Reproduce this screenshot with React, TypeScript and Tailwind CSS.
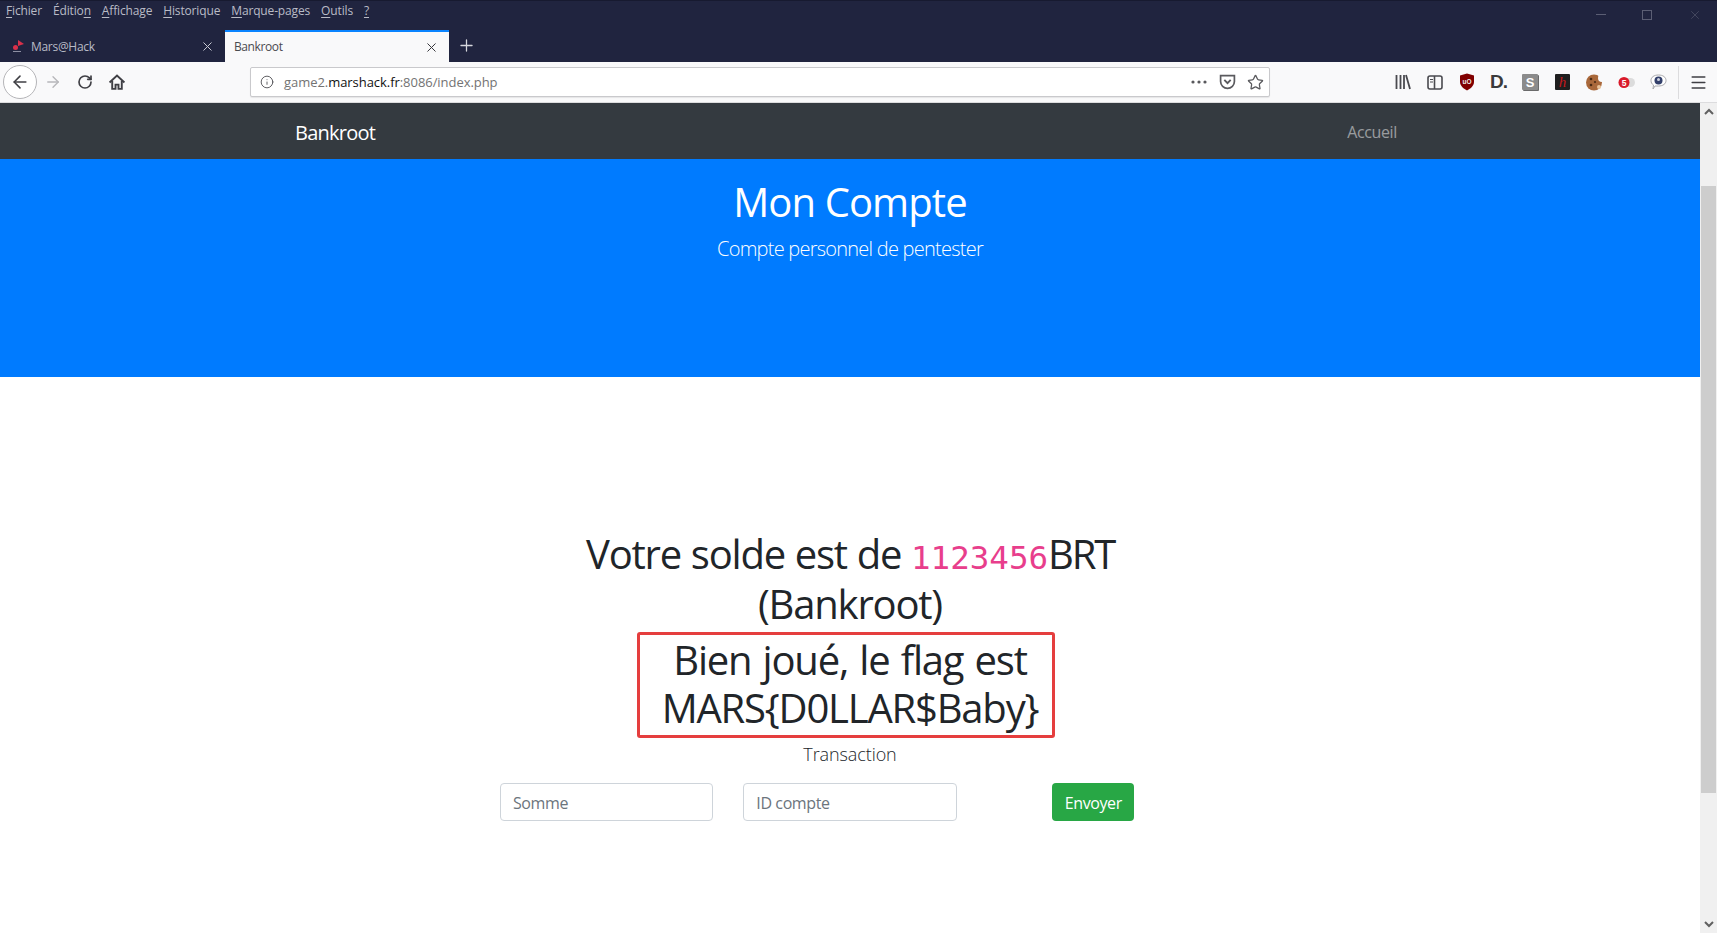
import { ArrowLeft, ArrowRight, RotateCw, Info, Star, X, Plus, Menu } from "lucide-react";

const sans = "font-['Open_Sans','Noto_Sans',sans-serif]";

function MenuItem({ before = "", u, after = "" }: { before?: string; u: string; after?: string }) {
  return (
    <span>
      {before}
      <u className="underline-offset-2">{u}</u>
      {after}
    </span>
  );
}

function Chrome() {
  return (
    <header className="bg-[#20243f] border-t border-[#171a30] font-['Open_Sans',sans-serif]">
      <div className="h-[29px] flex items-center justify-between">
        <div className="flex gap-[11px] pl-[6px] text-[12px] tracking-[-0.15px] text-[#b9bbc6] pb-[10px]">
          <MenuItem u="F" after="ichier" />
          <MenuItem before="Éditio" u="n" />
          <MenuItem u="A" after="ffichage" />
          <MenuItem u="H" after="istorique" />
          <MenuItem u="M" after="arque-pages" />
          <MenuItem u="O" after="utils" />
          <MenuItem u="?" />
        </div>
        <div className="flex items-center gap-[36px] pr-[15px] pb-[2px] text-[#5b5e74]">
          <div className="w-[10px] h-px bg-[#5b5e74]" />
          <div className="w-[10px] h-[10px] border border-[#5b5e74]" />
          <X size={14} strokeWidth={1} />
        </div>
      </div>
      <div className="h-[32px] flex items-end text-[12px] tracking-[-0.3px]">
        <div className="w-[225px] h-[32px] flex items-center pl-[12px] pr-[10px] text-[#b9bbc6]">
          <svg width="14" height="14" viewBox="0 0 14 14" className="mr-[5px]">
            <path d="M6 1 L12 5 L6 7 Z" fill="#d9304a" />
            <circle cx="3.5" cy="8.5" r="2.5" fill="#d9304a" />
            <rect x="1" y="12" width="8" height="1" fill="#8d8fa3" />
          </svg>
          <span className="flex-1 pt-[1px]">Mars@Hack</span>
          <X size={15} strokeWidth={1.6} className="text-[#c8cad3]" />
        </div>
        <div className="w-[224px] h-[32px] bg-[#f9f9fa] border-t-2 border-[#0a84ff] flex items-center pl-[9px] pr-[10px] text-[#4a4a4f]">
          <span className="flex-1 tracking-[-0.4px]">Bankroot</span>
          <X size={15} strokeWidth={1.6} className="text-[#38383d]" />
        </div>
        <div className="h-[32px] w-[34px] flex items-center justify-center pb-[2px] text-[#d6d7dd]">
          <Plus size={19} strokeWidth={1.6} />
        </div>
      </div>
      <div className="h-[41px] bg-[#f9f9fa] border-b border-[#dcdcde] flex items-center text-[#3f3f44]">
        <div className="ml-[3px] w-[34px] h-[34px] rounded-full border border-[#b5b5b8] bg-white flex items-center justify-center">
          <ArrowLeft size={20} strokeWidth={1.9} />
        </div>
        <ArrowRight size={18} strokeWidth={1.8} className="ml-[7px] text-[#b7b7ba]" />
        <RotateCw size={16} strokeWidth={2.5} className="ml-[15px]" />
        <svg width="18" height="17" viewBox="0 0 16 16" className="ml-[15px]" fill="none" stroke="currentColor" strokeWidth="1.8">
          <path d="M1 8 L8 1.5 L15 8" />
          <path d="M3.5 6.5 V14 H6.6 V10 H9.4 V14 H12.5 V6.5" />
        </svg>
        <div className="ml-[124px] w-[1020px] h-[30px] bg-white border border-[#c9c9cc] rounded-[2px] shadow-[0_1px_1px_rgba(0,0,0,0.08)] flex items-center pl-[9px] pr-[5px] text-[#737373]">
          <Info size={14} strokeWidth={1.5} className="text-[#4a4a4f]" />
          <span className="ml-[10px] flex-1 text-[13px] tracking-[-0.05px] pt-[1px]">
            game2.<span className="text-[#111]">marshack.fr</span>:8086/index.php
          </span>
          <svg width="16" height="4" viewBox="0 0 16 4" className="text-[#58585c]" fill="currentColor">
            <circle cx="2" cy="2" r="1.6" />
            <circle cx="8" cy="2" r="1.6" />
            <circle cx="14" cy="2" r="1.6" />
          </svg>
          <svg width="17" height="16" viewBox="0 0 16 15" className="ml-[12px]" fill="none" stroke="#5a5a5e" strokeWidth="1.6">
            <path d="M1.5 1.5 H14.5 V7 A6.5 6.5 0 0 1 1.5 7 Z" />
            <path d="M5 5.5 L8 8.5 L11 5.5" strokeWidth="1.8" />
          </svg>
          <Star size={17} strokeWidth={1.8} className="ml-[11px] text-[#5a5a5e]" />
        </div>
        <div className="ml-[125px] flex items-center h-full">
          <svg width="16" height="16" viewBox="0 0 16 16" stroke="#4a4a4f" strokeWidth="1.8" fill="none">
            <path d="M1.5 1 V15 M5.5 1 V15 M9 1 V15 M11 1 L15 15" />
          </svg>
          <svg width="16" height="15" viewBox="0 0 16 15" className="ml-[16px]" fill="none" stroke="#4a4a4f" strokeWidth="1.6">
            <rect x="1" y="1" width="14" height="13" rx="2" />
            <path d="M7.5 1 V14" />
            <path d="M3 4.5 H6 M3 7 H6" strokeWidth="1.2" />
          </svg>
          <svg width="16" height="18" viewBox="0 0 16 18" className="ml-[16px]">
            <path d="M8 0.5 L15 2.5 V9 C15 13 11 16 8 17.5 C5 16 1 13 1 9 V2.5 Z" fill="#800000" />
            <text x="8" y="11" textAnchor="middle" fontSize="6.5" fontWeight="700" fill="#eee" fontFamily="Liberation Sans">uO</text>
          </svg>
          <span className="ml-[15px] w-[19px] h-[16px] flex items-end text-[#3a3a3a] text-[19px] leading-[16px] font-black tracking-[-1px] font-['Liberation_Sans']">
            D.
          </span>
          <div className="ml-[13px] w-[16px] h-[16px] bg-[#8b8b8b] rounded-[1px] shadow-[1px_1px_0_#6a6a6a] flex items-center justify-center text-white text-[13px] leading-none font-bold font-['Liberation_Sans']">
            S
          </div>
          <div className="ml-[17px] w-[15px] h-[16px] bg-[#1f1f1f] rounded-[1px] flex items-center justify-center text-[#c8191d] text-[15px] leading-none italic font-['Liberation_Serif']">
            h
          </div>
          <svg width="17" height="17" viewBox="0 0 17 17" className="ml-[16px]">
            <circle cx="8" cy="8.5" r="8" fill="#a9683a" />
            <circle cx="16" cy="4" r="4" fill="#f9f9fa" />
            <circle cx="13" cy="13" r="2" fill="#e9c39a" />
            <circle cx="5" cy="5" r="1.3" fill="#4a2a14" />
            <circle cx="9" cy="8" r="1.1" fill="#4a2a14" />
            <circle cx="5" cy="11" r="1.3" fill="#4a2a14" />
          </svg>
          <svg width="17" height="13" viewBox="0 0 17 13" className="ml-[15px]">
            <rect x="6" y="2" width="11" height="9" rx="4.5" fill="#dcdcdc" />
            <circle cx="6" cy="6.5" r="5.5" fill="#d91a2a" />
            <text x="6" y="9.5" textAnchor="middle" fontSize="8.5" fontWeight="700" fill="#fff" fontFamily="Liberation Sans">5</text>
          </svg>
          <svg width="17" height="16" viewBox="0 0 17 16" className="ml-[15px]">
            <path d="M8.5 1 C13 1 16 3.2 16 6.5 C16 9.8 13 12 8.5 12 L5 12 L3 15 L3.5 11 C1.8 10 1 8.5 1 6.5 C1 3.2 4 1 8.5 1 Z" fill="#fff" stroke="#a8a8ac" />
            <circle cx="8.5" cy="6.5" r="4" fill="#33406b" />
            <circle cx="8.5" cy="5.5" r="1.5" fill="#cfd3e0" />
          </svg>
          <div className="ml-[11px] w-px h-[33px] bg-[#dcdcde]" />
          <Menu size={19} strokeWidth={1.9} className="ml-[10px] text-[#3f3f44]" />
        </div>
      </div>
    </header>
  );
}

function Scrollbar() {
  return (
    <aside className="w-[17px] bg-[#f0f0f0] flex flex-col items-center">
      <svg width="10" height="8" viewBox="0 0 10 8" className="mt-[5px] shrink-0 text-[#606060]" fill="none" stroke="currentColor" strokeWidth="2">
        <path d="M1 6 L5 2 L9 6" />
      </svg>
      <div className="mt-[70px] w-[15px] h-[607px] bg-[#cdcdcd] shrink-0" />
      <div className="flex-1" />
      <svg width="10" height="8" viewBox="0 0 10 8" className="mb-[5px] shrink-0 text-[#606060]" fill="none" stroke="currentColor" strokeWidth="2">
        <path d="M1 2 L5 6 L9 2" />
      </svg>
    </aside>
  );
}

function Field({ placeholder }: { placeholder: string }) {
  return (
    <div className="px-[15px]">
      <input
        placeholder={placeholder}
        className="w-full h-[38px] px-[12px] pt-[2px] bg-white border border-[#ced4da] rounded-[4px] text-[16px] tracking-[-0.4px] placeholder:text-[#6c757d] outline-none"
      />
    </div>
  );
}

export default function App() {
  return (
    <div className={`w-[1717px] h-[933px] overflow-hidden flex flex-col bg-white ${sans}`}>
      <Chrome />
      <div className="flex-1 min-h-0 flex">
        <main className="flex-1 min-w-0">
          <nav className="h-[56px] bg-[#343a40]">
            <div className="w-[1140px] mx-auto px-[15px] h-full flex items-center justify-between">
              <a className="text-[20px] text-white tracking-[-0.75px] pt-[4px]">Bankroot</a>
              <a className="text-[16px] text-[#ffffff80] px-[8px] tracking-[-0.35px] pt-[2px]">Accueil</a>
            </div>
          </nav>
          <section className="h-[218px] bg-[#007bff] text-white text-center pt-[19px]">
            <h1 className="text-[40px] leading-[48px] tracking-[-0.9px]">Mon Compte</h1>
            <p className="mt-[8px] text-[20px] leading-[30px] font-light tracking-[-0.76px]">Compte personnel de pentester</p>
          </section>
          <section className="pt-[152px] text-center text-[#212529]">
            <div className="w-[540px] mx-auto">
              <h2 className="text-[40px] leading-[50px] tracking-[-1.2px] [word-spacing:0.6px]">
                Votre solde est de{" "}
                <code className="font-['DejaVu_Sans_Mono',monospace] leading-none text-[32.5px] tracking-[0px] text-[#e83e8c]">1123456</code>
                <span className="tracking-[-2.2px]">BRT</span> (Bankroot)
              </h2>
            </div>
            <div className="ml-[637px] w-[418px] mt-[3px] h-[106px] pl-[8px] border-[3px] border-[#e53e3e] rounded-[3px]">
              <h1 className="text-[40px] leading-[48px] tracking-[-1.2px] [word-spacing:2px] pt-[1px]">
                Bien joué, le flag est MARS{"{"}D0LLAR$Baby{"}"}
              </h1>
            </div>
            <p className="mt-[1px] text-[18px] leading-[30px] font-light tracking-[-0.1px]">Transaction</p>
            <form className="w-[730px] mx-auto grid grid-cols-3 mt-[14px]" onSubmit={(e) => e.preventDefault()}>
              <Field placeholder="Somme" />
              <Field placeholder="ID compte" />
              <div className="flex justify-center">
                <button className="h-[38px] w-[82px] pt-[2px] rounded-[4px] bg-[#28a745] text-white text-[16px] tracking-[-0.4px]">Envoyer</button>
              </div>
            </form>
          </section>
        </main>
        <Scrollbar />
      </div>
    </div>
  );
}
